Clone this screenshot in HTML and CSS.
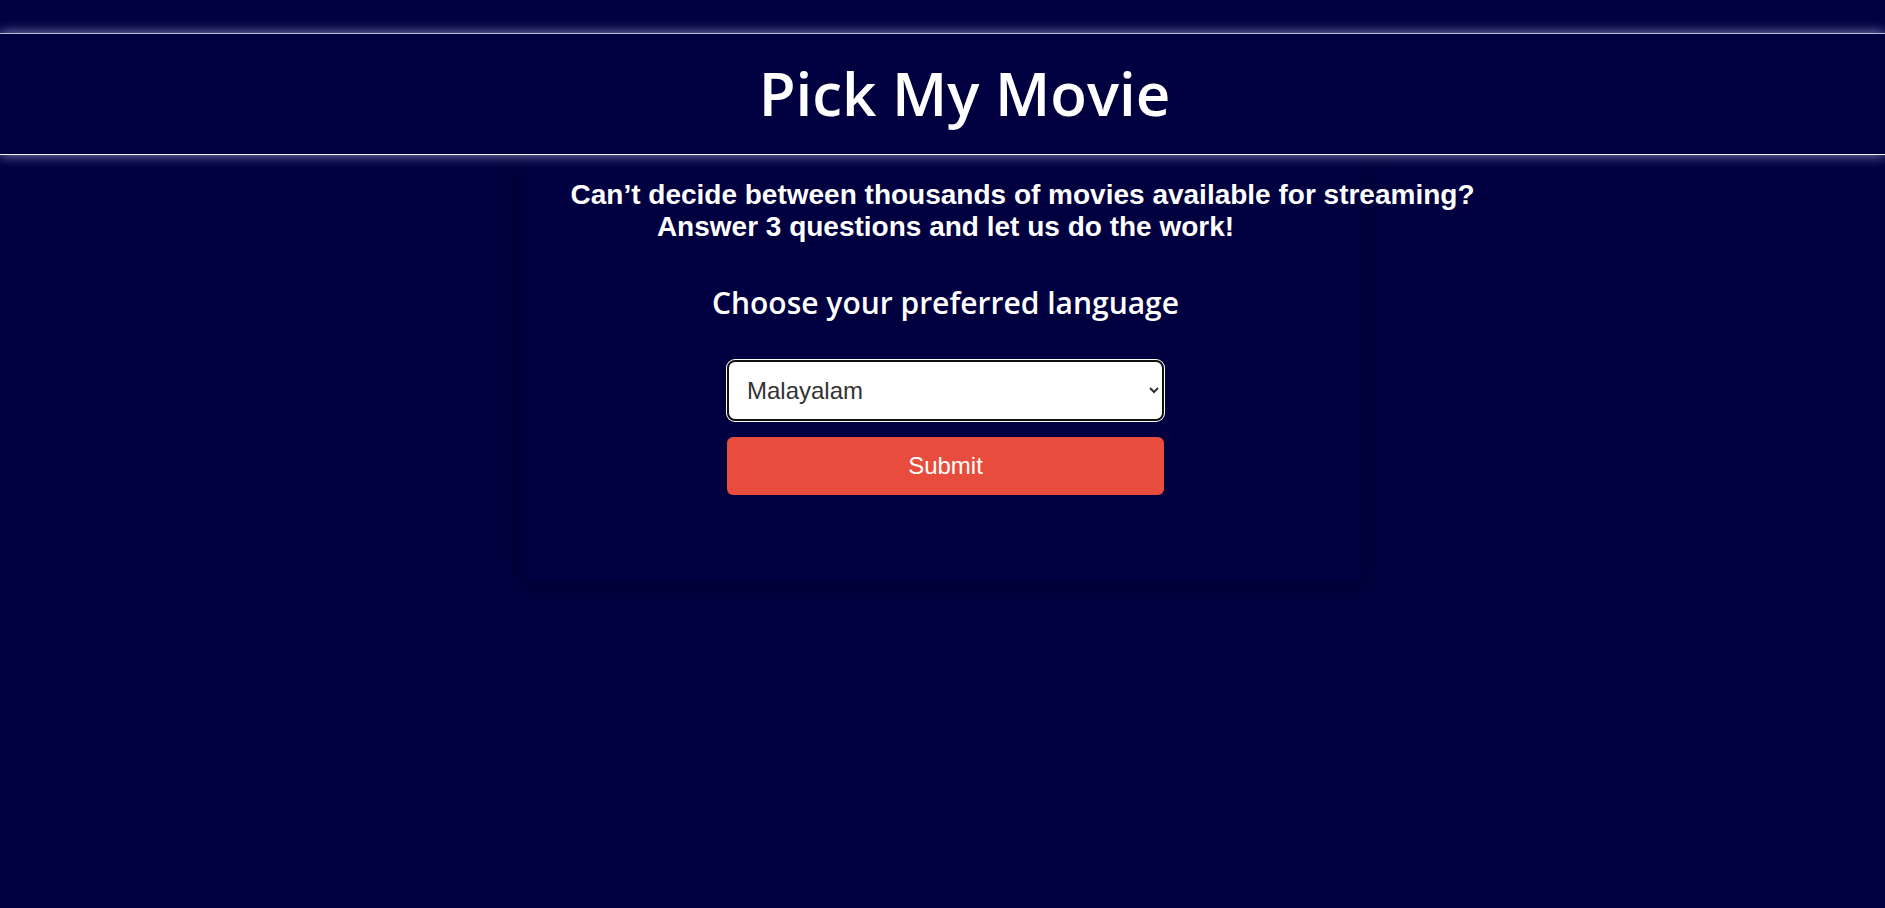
FILE: index.html
```html
<!DOCTYPE html>
<html lang="en">
<head>
<meta charset="utf-8">
<title>Pick My Movie</title>
<link rel="stylesheet" href="styles.css">
</head>
<body>
<header class="site-header">
  <h1 class="site-title">Pick My Movie</h1>
</header>
<main class="panel">
  <p class="intro">
    <span class="intro-line">Can’t decide between thousands of movies available for streaming?</span>
    <span class="intro-line">Answer 3 questions and let us do the work!</span>
  </p>
  <h2 class="prompt">Choose your preferred language</h2>
  <form class="picker">
    <select class="picker-select" name="language">
      <option>English</option>
      <option>Hindi</option>
      <option selected>Malayalam</option>
      <option>Tamil</option>
      <option>Telugu</option>
    </select>
    <button class="picker-submit" type="button">Submit</button>
  </form>
</main>
</body>
</html>
```

FILE: styles.css
```css
html, body {
  margin: 0;
  padding: 0;
}

body {
  background: #000040;
  color: #ffffff;
  font-family: "Open Sans", "Liberation Sans", sans-serif;
  min-height: 908px;
}

.site-header {
  margin-top: 33px;
  border-top: 1px solid #b8b8d8;
  border-bottom: 1px solid #f4f4ff;
  box-shadow: 0 0 12px rgba(190, 190, 240, 0.75);
  background: #000040;
  padding: 16px 0 17px;
  text-align: center;
  position: relative;
  z-index: 1;
}

.site-title {
  margin: 0;
  padding-left: 44px;
  font-family: "Open Sans", sans-serif;
  font-size: 60px;
  font-weight: 600;
  line-height: 87px;
  color: #ffffff;
}

.panel {
  width: 840px;
  margin: 0 auto;
  padding: 24px 42px 87px 48px;
  box-sizing: border-box;
  box-shadow: 0 0 24px rgba(0, 0, 20, 0.45);
}

.intro {
  margin: 0;
  font-family: "Liberation Sans", Arial, sans-serif;
  font-weight: 700;
  font-size: 28px;
  line-height: 32px;
  text-align: center;
  white-space: nowrap;
}

.intro-line {
  display: block;
}

.prompt {
  margin: 39px 0 0;
  font-family: "Open Sans", sans-serif;
  font-weight: 600;
  font-size: 30px;
  line-height: 41px;
  text-align: center;
}

.picker {
  margin-top: 37px;
  display: flex;
  flex-direction: column;
  align-items: center;
  gap: 16px;
}

.picker-select {
  width: 437px;
  height: 61px;
  box-sizing: border-box;
  border: 2px solid #101010;
  border-radius: 8px;
  box-shadow: 0 0 0 1px #ffffff;
  background-color: #ffffff;
  color: #333333;
  font-family: "Liberation Sans", Arial, sans-serif;
  font-size: 24px;
  padding: 0 10px 0 14px;
}

.picker-submit {
  width: 437px;
  height: 58px;
  border: none;
  border-radius: 6px;
  background: #e74c3c;
  color: #ffffff;
  font-family: "Liberation Sans", Arial, sans-serif;
  font-size: 24px;
  cursor: pointer;
}
```
